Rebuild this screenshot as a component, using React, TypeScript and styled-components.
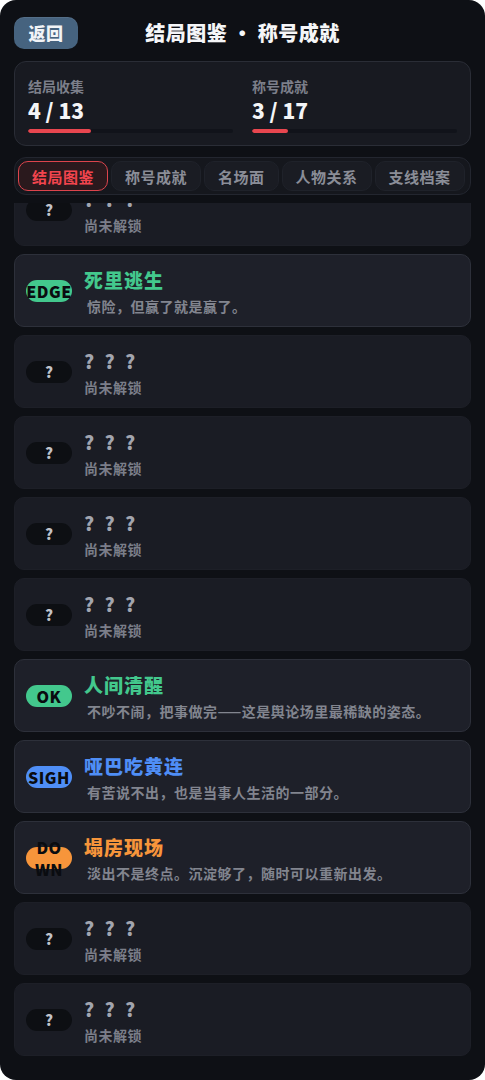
import React, { useLayoutEffect, useRef } from "react";
import styled, { createGlobalStyle } from "styled-components";

const Global = createGlobalStyle`
  html, body { margin: 0; padding: 0; background: #ffffff; }
  body { font-family: "Noto Sans CJK SC", "Noto Sans", sans-serif; }
  * { box-sizing: border-box; }
`;

const Panel = styled.div`
  width: 100%;
  height: 100vh;
  background: #0e1015;
  border-radius: 16px;
  overflow: hidden;
  padding: 17px 14px 14px;
  display: flex;
  flex-direction: column;
`;

const Header = styled.header`
  display: grid;
  grid-template-columns: 1fr auto 1fr;
  align-items: center;
  height: 32px;
`;

const BackButton = styled.button`
  justify-self: start;
  width: 64px;
  height: 32px;
  border: none;
  border-radius: 10px;
  background: #46637f;
  box-shadow: inset 0 1px 0 rgba(255, 255, 255, 0.08);
  color: #f2f4f7;
  font-family: inherit;
  font-size: 17px;
  font-weight: 900;
  letter-spacing: 0.5px;
  line-height: 32px;
  padding: 0;
  cursor: pointer;
`;

const Title = styled.h1`
  margin: 0;
  font-size: 20px;
  font-weight: 900;
  color: #f5f6f8;
  letter-spacing: 0.5px;
  line-height: 32px;
`;

const StatsCard = styled.section`
  margin-top: 12px;
  background: #181a21;
  border: 1px solid #2a2d36;
  border-radius: 12px;
  padding: 15px 13px 12px;
  display: grid;
  grid-template-columns: 1fr 1fr;
  column-gap: 19px;
`;

const Stat = styled.div`
  display: flex;
  flex-direction: column;
`;

const StatLabel = styled.div`
  font-size: 14px;
  font-weight: 700;
  color: #7c7f8a;
  line-height: 18px;
`;

const StatValue = styled.div`
  margin-top: 3px;
  font-size: 21px;
  font-weight: 900;
  color: #f4f5f7;
  line-height: 24px;
`;

const Track = styled.div`
  margin-top: 7px;
  height: 4px;
  border-radius: 2px;
  background: #11131a;
  overflow: hidden;
`;

const Fill = styled.div`
  height: 100%;
  border-radius: 2px;
  background: #e8464f;
`;

const Tabs = styled.nav`
  margin-top: 11px;
  display: flex;
  gap: 3px;
  padding: 3px;
  border: 1px solid #23262f;
  border-radius: 12px;
  background: #15171d;
`;

const Tab = styled.button<{ $active?: boolean }>`
  height: 30px;
  padding: 0 13px;
  border-radius: 10px;
  font-family: inherit;
  font-size: 15px;
  font-weight: 700;
  letter-spacing: 0.5px;
  white-space: nowrap;
  cursor: pointer;
  border: 1px solid ${(p) => (p.$active ? "#dc444c" : "#1f222a")};
  background: ${(p) => (p.$active ? "#2a191d" : "#1a1c23")};
  color: ${(p) => (p.$active ? "#f2454e" : "#8a8d97")};
`;

const List = styled.div`
  margin-top: 8px;
  flex: 1;
  min-height: 0;
  overflow-y: auto;
  scrollbar-width: none;
  display: flex;
  flex-direction: column;
  gap: 8px;
  padding-bottom: 10px;
  &::-webkit-scrollbar { display: none; }
`;

const Item = styled.div<{ $unlocked: boolean }>`
  flex: none;
  height: 73px;
  display: flex;
  align-items: center;
  gap: 12px;
  padding: 0 11px;
  border-radius: 10px;
  background: ${(p) => (p.$unlocked ? "#1e2029" : "#1a1c24")};
  border: 1px solid ${(p) => (p.$unlocked ? "#2d303a" : "#1d1f27")};
`;

const Badge = styled.div<{ $color?: string }>`
  flex: none;
  width: 46px;
  height: 22px;
  border-radius: 11px;
  display: flex;
  align-items: center;
  justify-content: center;
  text-align: center;
  background: ${(p) => p.$color ?? "#0d0f13"};
  color: ${(p) => (p.$color ? "#0a0c10" : "#c0c3ca")};
  font-size: ${(p) => (p.$color ? "16px" : "15px")};
  font-weight: 900;
  letter-spacing: ${(p) => (p.$color ? "0.5px" : "0")};
  line-height: 22px;
`;

const Body = styled.div`
  display: flex;
  flex-direction: column;
  gap: 4px;
  margin-top: 3px;
  min-width: 0;
`;

const ItemTitle = styled.div<{ $color?: string }>`
  font-size: 19px;
  font-weight: 900;
  letter-spacing: ${(p) => (p.$color ? "1px" : "3px")};
  line-height: 24px;
  color: ${(p) => p.$color ?? "#a2a5af"};
  white-space: nowrap;
`;

const ItemDesc = styled.div<{ $unlocked: boolean }>`
  font-size: 14px;
  font-weight: 700;
  letter-spacing: 0.5px;
  line-height: 20px;
  padding-left: ${(p) => (p.$unlocked ? "3px" : "0")};
  color: ${(p) => (p.$unlocked ? "#82858f" : "#7b7e89")};
  white-space: nowrap;
`;

type Ending = {
  badge?: string[];
  color?: string;
  title?: string;
  desc?: string;
};

const endings: Ending[] = [
  {},
  {},
  {},
  { badge: ["EDGE"], color: "#43c88d", title: "死里逃生", desc: "惊险，但赢了就是赢了。" },
  {},
  {},
  {},
  {},
  { badge: ["OK"], color: "#43c88d", title: "人间清醒", desc: "不吵不闹，把事做完——这是舆论场里最稀缺的姿态。" },
  { badge: ["SIGH"], color: "#4f8ef6", title: "哑巴吃黄连", desc: "有苦说不出，也是当事人生活的一部分。" },
  { badge: ["DO", "WN"], color: "#f7953b", title: "塌房现场", desc: "淡出不是终点。沉淀够了，随时可以重新出发。" },
  {},
  {},
];

const tabs = ["结局图鉴", "称号成就", "名场面", "人物关系", "支线档案"];

export default function App() {
  const listRef = useRef<HTMLDivElement>(null);
  useLayoutEffect(() => {
    const el = listRef.current;
    if (el) el.scrollTop = el.scrollHeight;
  }, []);

  return (
    <>
      <Global />
      <Panel>
        <Header>
          <BackButton>返回</BackButton>
          <Title>结局图鉴 · 称号成就</Title>
          <span />
        </Header>

        <StatsCard>
          <Stat>
            <StatLabel>结局收集</StatLabel>
            <StatValue>4 / 13</StatValue>
            <Track>
              <Fill style={{ width: `${(4 / 13) * 100}%` }} />
            </Track>
          </Stat>
          <Stat>
            <StatLabel>称号成就</StatLabel>
            <StatValue>3 / 17</StatValue>
            <Track>
              <Fill style={{ width: `${(3 / 17) * 100}%` }} />
            </Track>
          </Stat>
        </StatsCard>

        <Tabs>
          {tabs.map((t, i) => (
            <Tab key={t} $active={i === 0}>
              {t}
            </Tab>
          ))}
        </Tabs>

        <List ref={listRef}>
          {endings.map((e, i) => {
            const unlocked = !!e.title;
            return (
              <Item key={i} $unlocked={unlocked}>
                <Badge $color={e.color}>
                  <span>
                    {unlocked
                      ? e.badge!.map((part, j) => (
                          <React.Fragment key={j}>
                            {j > 0 && <wbr />}
                            {part}
                          </React.Fragment>
                        ))
                      : "?"}
                  </span>
                </Badge>
                <Body>
                  <ItemTitle $color={e.color}>{unlocked ? e.title : "? ? ?"}</ItemTitle>
                  <ItemDesc $unlocked={unlocked}>{unlocked ? e.desc : "尚未解锁"}</ItemDesc>
                </Body>
              </Item>
            );
          })}
        </List>
      </Panel>
    </>
  );
}
